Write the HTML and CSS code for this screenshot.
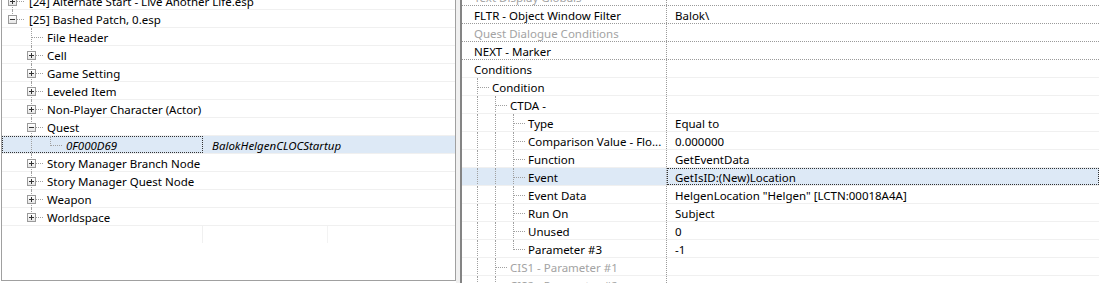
FILE: index.html
```html
<!DOCTYPE html>
<html lang="en">
<head>
    <meta charset="UTF-8">
    <title>xEdit - Bashed Patch</title>
    <link rel="stylesheet" href="styles.css">
</head>
<body>
    <!-- left: plugin tree -->
    <div class="tree-panel">
        <div class="tree">
            <div class="row">
                <div class="cell-name"><span class="node full"><span class="box plus"></span></span><span class="label first">[24] Alternate Start - Live Another Life.esp</span></div>
                <div class="cell"></div><div class="cell"></div>
            </div>
            <div class="row">
                <div class="cell-name"><span class="node last"><span class="box"></span></span><span class="label first">[25] Bashed Patch, 0.esp</span></div>
                <div class="cell"></div><div class="cell"></div>
            </div>
            <div class="row">
                <div class="cell-name"><span class="indent"></span><span class="node full"></span><span class="label">File Header</span></div>
                <div class="cell"></div><div class="cell"></div>
            </div>
            <div class="row">
                <div class="cell-name"><span class="indent"></span><span class="node full"><span class="box plus"></span></span><span class="label">Cell</span></div>
                <div class="cell"></div><div class="cell"></div>
            </div>
            <div class="row">
                <div class="cell-name"><span class="indent"></span><span class="node full"><span class="box plus"></span></span><span class="label">Game Setting</span></div>
                <div class="cell"></div><div class="cell"></div>
            </div>
            <div class="row">
                <div class="cell-name"><span class="indent"></span><span class="node full"><span class="box plus"></span></span><span class="label">Leveled Item</span></div>
                <div class="cell"></div><div class="cell"></div>
            </div>
            <div class="row">
                <div class="cell-name"><span class="indent"></span><span class="node full"><span class="box plus"></span></span><span class="label">Non-Player Character (Actor)</span></div>
                <div class="cell"></div><div class="cell"></div>
            </div>
            <div class="row">
                <div class="cell-name"><span class="indent"></span><span class="node full"><span class="box"></span></span><span class="label">Quest</span></div>
                <div class="cell"></div><div class="cell"></div>
            </div>
            <div class="row selected">
                <div class="cell-name focus"><span class="indent"></span><span class="indent pipe"></span><span class="node last"></span><span class="label italic">0F000D69</span></div>
                <div class="cell italic">BalokHelgenCLOCStartup</div><div class="cell"></div>
            </div>
            <div class="row">
                <div class="cell-name"><span class="indent"></span><span class="node full"><span class="box plus"></span></span><span class="label">Story Manager Branch Node</span></div>
                <div class="cell"></div><div class="cell"></div>
            </div>
            <div class="row">
                <div class="cell-name"><span class="indent"></span><span class="node full"><span class="box plus"></span></span><span class="label">Story Manager Quest Node</span></div>
                <div class="cell"></div><div class="cell"></div>
            </div>
            <div class="row">
                <div class="cell-name"><span class="indent"></span><span class="node full"><span class="box plus"></span></span><span class="label">Weapon</span></div>
                <div class="cell"></div><div class="cell"></div>
            </div>
            <div class="row">
                <div class="cell-name"><span class="indent"></span><span class="node last"><span class="box plus"></span></span><span class="label">Worldspace</span></div>
                <div class="cell"></div><div class="cell"></div>
            </div>
        </div>
        <div class="tree-empty">
            <div class="cell"></div><div class="cell"></div><div></div>
        </div>
    </div>

    <div class="splitter"></div>

    <!-- right: record view -->
    <div class="props">
        <div class="prop-list">
            <div class="prop-row dotted">
                <div class="prop-name"><span class="label first muted">Text Display Globals</span></div>
                <div class="prop-value"></div>
            </div>
            <div class="prop-row dotted">
                <div class="prop-name"><span class="label first">FLTR - Object Window Filter</span></div>
                <div class="prop-value">Balok\</div>
            </div>
            <div class="prop-row dotted">
                <div class="prop-name"><span class="label first muted">Quest Dialogue Conditions</span></div>
                <div class="prop-value"></div>
            </div>
            <div class="prop-row dotted">
                <div class="prop-name"><span class="label first">NEXT - Marker</span></div>
                <div class="prop-value"></div>
            </div>
            <div class="prop-row">
                <div class="prop-name"><span class="label first">Conditions</span></div>
                <div class="prop-value"></div>
            </div>
            <div class="prop-row">
                <div class="prop-name"><span class="node full"></span><span class="label">Condition</span></div>
                <div class="prop-value"></div>
            </div>
            <div class="prop-row">
                <div class="prop-name"><span class="indent pipe"></span><span class="node full"></span><span class="label">CTDA -</span></div>
                <div class="prop-value"></div>
            </div>
            <div class="prop-row">
                <div class="prop-name"><span class="indent pipe"></span><span class="indent pipe"></span><span class="node full"></span><span class="label">Type</span></div>
                <div class="prop-value">Equal to</div>
            </div>
            <div class="prop-row">
                <div class="prop-name"><span class="indent pipe"></span><span class="indent pipe"></span><span class="node full"></span><span class="label">Comparison Value - Flo...</span></div>
                <div class="prop-value">0.000000</div>
            </div>
            <div class="prop-row">
                <div class="prop-name"><span class="indent pipe"></span><span class="indent pipe"></span><span class="node full"></span><span class="label">Function</span></div>
                <div class="prop-value">GetEventData</div>
            </div>
            <div class="prop-row selected">
                <div class="prop-name"><span class="indent pipe"></span><span class="indent pipe"></span><span class="node full"></span><span class="label">Event</span></div>
                <div class="prop-value focus">GetIsID:(New)Location</div>
            </div>
            <div class="prop-row">
                <div class="prop-name"><span class="indent pipe"></span><span class="indent pipe"></span><span class="node full"></span><span class="label">Event Data</span></div>
                <div class="prop-value">HelgenLocation "Helgen" [LCTN:00018A4A]</div>
            </div>
            <div class="prop-row">
                <div class="prop-name"><span class="indent pipe"></span><span class="indent pipe"></span><span class="node full"></span><span class="label">Run On</span></div>
                <div class="prop-value">Subject</div>
            </div>
            <div class="prop-row">
                <div class="prop-name"><span class="indent pipe"></span><span class="indent pipe"></span><span class="node full"></span><span class="label">Unused</span></div>
                <div class="prop-value">0</div>
            </div>
            <div class="prop-row">
                <div class="prop-name"><span class="indent pipe"></span><span class="indent pipe"></span><span class="node last"></span><span class="label">Parameter #3</span></div>
                <div class="prop-value">-1</div>
            </div>
            <div class="prop-row">
                <div class="prop-name"><span class="indent pipe"></span><span class="node full"></span><span class="label muted">CIS1 - Parameter #1</span></div>
                <div class="prop-value"></div>
            </div>
            <div class="prop-row">
                <div class="prop-name"><span class="indent pipe"></span><span class="node full"></span><span class="label muted">CIS2 - Parameter #2</span></div>
                <div class="prop-value"></div>
            </div>
        </div>
    </div>
</body>
</html>
```

FILE: styles.css
```css
* {
    box-sizing: border-box;
}
html, body {
    margin: 0;
}
body {
    font-family: "Segoe UI", "Noto Sans", sans-serif;
    font-size: 11.5px;
    color: #000;
    background-color: #fff;
    display: flex;
    height: 283px;
    padding-left: 1px;
    overflow: hidden;
}

/* left tree */
.tree-panel {
    flex: 0 0 455px;
    height: 281px;
    border-left: 1px solid #a0a0a0;
    border-right: 1px solid #a0a0a0;
    border-bottom: 1px solid #a0a0a0;
    display: flex;
    flex-direction: column;
    overflow: hidden;
}
.tree {
    margin-top: -8px;
}
.row, .tree-empty {
    display: grid;
    grid-template-columns: 201px 125px 1fr;
}
.row {
    height: 18px;
    line-height: 19px;
    border-bottom: 1px solid #f0f0f0;
    white-space: nowrap;
}
.cell-name {
    display: flex;
    padding-left: 1px;
    height: 17px;
}
.cell {
    padding-left: 9px;
    height: 17px;
}
.tree-empty {
    flex: 1;
}
.tree-empty .cell {
    border-right: 1px solid #f0f0f0;
}
.tree-empty .cell + .cell {
    border-right-color: #f3f3f3;
}

/* tree lines */
.indent, .node {
    position: relative;
    flex: 0 0 19px;
    height: 17px;
}
.pipe::before, .node::before {
    content: "";
    position: absolute;
    left: 9px;
    top: 0;
    bottom: -1px;
    border-left: 1px dotted #a0a0a0;
}
.node.last::before {
    bottom: auto;
    height: 10px;
}
.node::after {
    content: "";
    position: absolute;
    left: 10px;
    top: 9px;
    width: 11px;
    border-top: 1px dotted #a0a0a0;
}
.box {
    position: absolute;
    left: 5px;
    top: 5px;
    width: 9px;
    height: 9px;
    border: 1px solid #9a9a9a;
    background: linear-gradient(#ffffff, #e6e6e6);
    z-index: 1;
}
.box::before {
    content: "";
    position: absolute;
    left: 1px;
    top: 3px;
    width: 5px;
    height: 1px;
    background-color: #333;
}
.box.plus::after {
    content: "";
    position: absolute;
    left: 3px;
    top: 1px;
    width: 1px;
    height: 5px;
    background-color: #333;
}
.label {
    margin-left: 6px;
    white-space: nowrap;
}
.label.first {
    margin-left: 7px;
}
.italic {
    font-style: italic;
}
.muted {
    color: #a3a3a3;
}
.selected {
    background-color: #dde9f6;
}
.focus {
    outline: 1px dotted #333;
    outline-offset: -1px;
}

.splitter {
    flex: 0 0 4px;
    background-color: #f0f0f0;
}

/* right record view */
.props {
    flex: 1;
    border-left: 2px solid #848484;
    overflow: hidden;
}
.prop-list {
    margin-top: -12px;
}
.prop-row {
    display: flex;
    height: 18px;
    line-height: 19px;
    border-bottom: 1px solid #f0f0f0;
    white-space: nowrap;
}
.prop-row.dotted {
    border-bottom: 1px dotted #9a9a9a;
}
.prop-name {
    flex: 0 0 205px;
    display: flex;
    height: 17px;
    padding-left: 6px;
    border-right: 1px dotted #9a9a9a;
    overflow: hidden;
}
.prop-name .indent, .prop-name .node {
    flex-basis: 18px;
}
.prop-name .label.first {
    margin-left: 6px;
}
.prop-value {
    flex: 1;
    height: 17px;
    padding-left: 8px;
}
```
